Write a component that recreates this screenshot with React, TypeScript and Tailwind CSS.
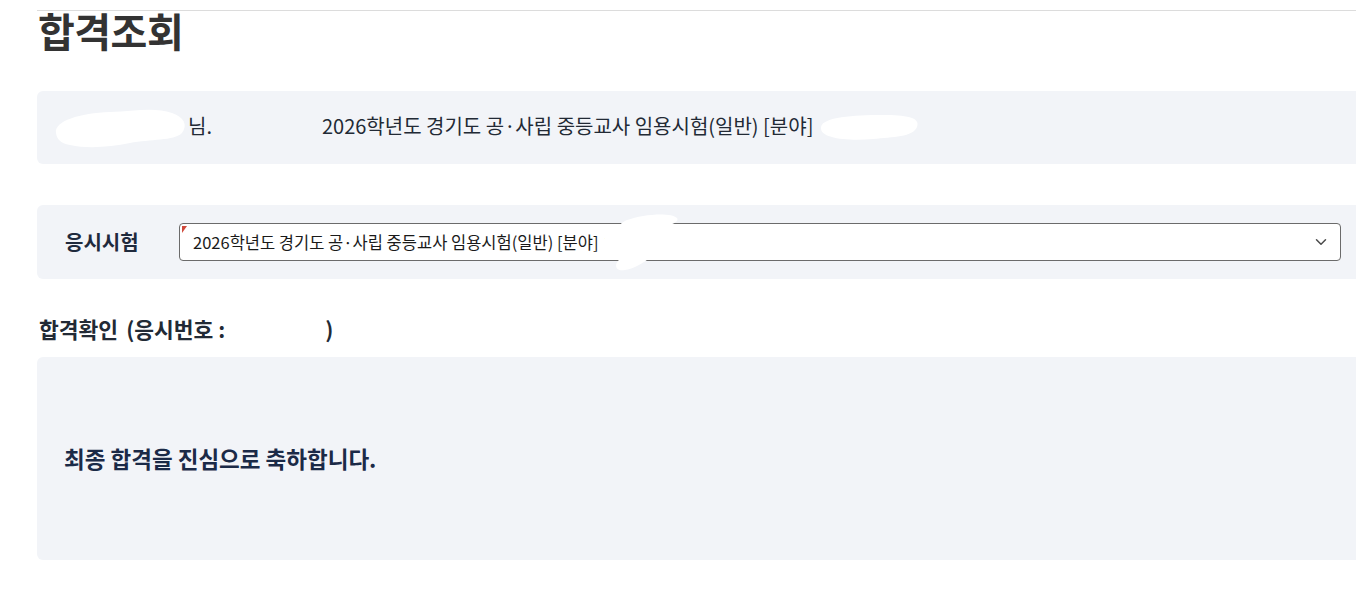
import { ChevronDown } from 'lucide-react';

const font = { fontFamily: '"Noto Sans CJK KR", "Noto Sans", sans-serif' };

// white redaction scribble drawn over personal info
function Blob({ w, h, d }: { w: number; h: number; d: string }) {
  return (
    <svg width={w} height={h} viewBox={`0 0 ${w} ${h}`} className="inline-block align-middle">
      <path d={d} fill="#ffffff" />
    </svg>
  );
}

export default function App() {
  return (
    <div className="w-full h-[593px] overflow-hidden bg-white text-[#1f2937]" style={font}>
      <div className="ml-[37px] w-[1340px] pt-[10px]">
        <div className="border-t border-[#dcdcdc]">
          <h1 className="pl-[1px] text-[40px] leading-[38px] font-bold text-[#333333] tracking-[-0.5px]">합격조회</h1>
        </div>

        {/* 응시자 정보 */}
        <div className="mt-[42px] h-[73px] rounded-md bg-[#f2f4f8] flex items-center pl-[13px] pb-[3px] text-[20px] text-[#222a35]">
          <span className="flex items-center">
            <Blob
              w={138}
              h={46}
              d="M6 30 C4 18 30 10 60 9 C85 8 105 4 122 10 C134 14 138 22 132 30 C124 38 100 36 80 40 C60 44 38 46 20 42 C10 40 7 36 6 30 Z"
            />
            <span>님.</span>
          </span>
          <span className="ml-[110px] flex items-center">
            2026학년도 경기도 공·사립 중등교사 임용시험(일반) [분야]
            <Blob
              w={110}
              h={34}
              d="M8 18 C10 8 40 6 70 6 C92 6 108 8 104 18 C100 28 80 28 60 30 C36 32 6 30 8 18 Z"
            />
          </span>
        </div>

        {/* 응시시험 선택 */}
        <div className="mt-[41px] h-[74px] rounded-md bg-[#f2f4f8] flex items-center pl-[28px]">
          <span className="w-[114px] text-[20px] font-bold text-[#1f2a3d]">응시시험</span>
          <div className="relative w-[1162px] h-[38px] rounded-[4px] border border-[#6b6b6b] bg-white flex items-center pl-[13px] pr-[10px]">
            <span className="absolute left-[2px] top-[2px] w-0 h-0 border-t-[7px] border-t-[#d04a3c] border-r-[5px] border-r-transparent" />
            <span className="flex-1 flex items-center text-[16.5px] text-[#1a1a1a]">
              2026학년도 경기도 공·사립 중등교사 임용시험(일반) [분야] ㄷ
              <span className="-ml-[22px] -my-[20px]">
                <Blob
                  w={86}
                  h={64}
                  d="M32 10 C48 4 76 2 82 8 C86 14 64 18 44 22 C64 22 76 28 68 36 C58 46 44 58 30 60 C20 62 18 54 26 48 C36 40 22 40 10 40 C2 40 4 30 14 26 C22 22 20 16 32 10 Z"
                />
              </span>
            </span>
            <ChevronDown className="w-[18px] h-[18px] text-[#4b4b4b]" strokeWidth={2} />
          </div>
        </div>

        {/* 합격확인 */}
        <div className="mt-[36px] h-[28px] pl-[2px] flex items-center text-[21.5px] leading-[28px] font-bold text-[#222a35]">
          <span>합격확인</span>
          <span className="ml-[8px]">(응시번호 :</span>
          <span className="w-[100px]" />
          <span>)</span>
        </div>
        <div className="mt-[14px] h-[203px] rounded-md bg-[#f2f4f8] flex items-center pl-[27px]">
          <p className="text-[22.5px] font-bold text-[#1b2a47]">최종 합격을 진심으로 축하합니다.</p>
        </div>
      </div>
    </div>
  );
}
